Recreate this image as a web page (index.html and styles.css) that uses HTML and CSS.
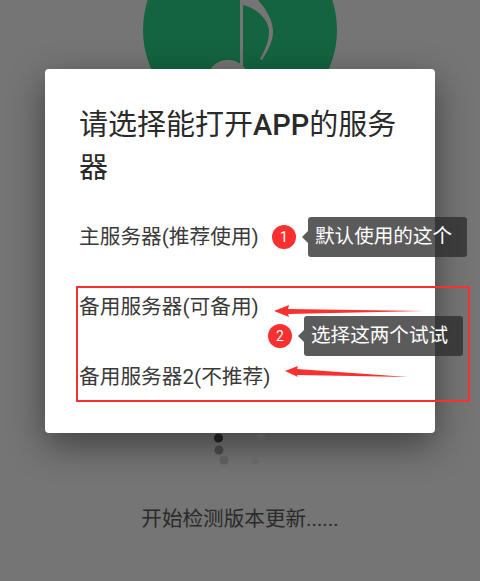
FILE: index.html
```html
<!DOCTYPE html>
<html lang="zh-CN">
<head>
  <meta charset="UTF-8" />
  <meta name="viewport" content="width=device-width, initial-scale=1.0"/>
  <title>选择服务器</title>
  <link rel="stylesheet" href="styles.css">
</head>
<body>

<div class="screen">
  <svg class="logo" width="200" height="100" viewBox="140 0 200 100">
    <circle cx="240" cy="30" r="97" fill="#14643f"/>
    <path d="M240 0h3v72h-3z" fill="#757575"/>
    <ellipse cx="228" cy="78" rx="20" ry="18" fill="#757575"/>
    <path d="M243 5L243 0H258C266 9 273 20 273 32C273 42 267 52 262 60L260 59C265 50 269 41 269 32C269 19 256 8 243 5Z" fill="#757575"/>
  </svg>

  <div class="dialog">
    <h2 class="dialog-title">请选择能打开<b>APP</b>的服务<br>器</h2>
    <div class="option">主服务器(推荐使用)</div>
    <div class="option">备用服务器(可备用)</div>
    <div class="option">备用服务器2(不推荐)</div>
  </div>

  <svg class="spinner" width="60" height="34" viewBox="210 433 60 34">
    <circle cx="218.5" cy="438" r="4.5" fill="#1c1c1c"/>
    <circle cx="219" cy="450" r="4.5" fill="#404040"/>
    <circle cx="224" cy="460" r="4.5" fill="#5c5c5c"/>
    <circle cx="261" cy="438" r="4.5" fill="#575757"/>
    <circle cx="255" cy="460" r="4" fill="#666"/>
  </svg>

  <p class="status">开始检测版本更新......</p>

  <!-- red notes drawn over the shot -->
  <div class="red-box"></div>
  <span class="badge badge-1">1</span>
  <span class="badge badge-2">2</span>
  <div class="tip tip-1">默认使用的这个</div>
  <div class="tip tip-2">选择这两个试试</div>
  <svg class="arrows" width="480" height="581" viewBox="0 0 480 581">
    <path d="M274 311L289 305L288 309L424 311L288 314L289 317Z" fill="#f8302f"/>
    <path d="M285 371L298 366L297 369L408 377L297 375L298 377Z" fill="#f8302f"/>
  </svg>
</div>

</body>
</html>
```

FILE: styles.css
```css
body {
  margin: 0;
  font-family: Roboto, "Noto Sans CJK SC", sans-serif;
}
.screen {
  position: relative;
  width: 480px;
  height: 581px;
  overflow: hidden;
  background: #757575;
  display: flex;
  flex-direction: column;
  align-items: center;
  padding-top: 69px;
  box-sizing: border-box;
}
.logo {
  position: absolute;
  left: 140px;
  top: 0;
}
.dialog {
  position: relative;
  width: 390px;
  height: 364px;
  box-sizing: border-box;
  padding: 35px 30px 21px 34px;
  background: #fff;
  border-radius: 4px;
  box-shadow: 0 12px 36px rgba(0, 0, 0, 0.45);
}
.dialog-title {
  margin: 0 0 12px;
  font-size: 29px;
  line-height: 43px;
  font-weight: 400;
  color: #2a2a2a;
}
.dialog-title b {
  font-weight: 500;
}
.option {
  height: 70px;
  line-height: 70px;
  font-size: 20.7px;
  color: #3a3a3a;
  white-space: nowrap;
}
.spinner {
  position: relative;
}
.status {
  position: relative;
  margin: 37px 0 0;
  font-size: 20.6px;
  line-height: 30px;
  color: #2a2a2a;
}
.red-box {
  position: absolute;
  left: 76px;
  top: 286px;
  width: 394px;
  height: 116px;
  box-sizing: border-box;
  border: 2px solid #f8302f;
}
.badge {
  position: absolute;
  width: 24px;
  height: 24px;
  border-radius: 50%;
  background: #f8302f;
  color: #fff;
  font-size: 14px;
  line-height: 24px;
  text-align: center;
}
.badge-1 {
  left: 272px;
  top: 225px;
}
.badge-2 {
  left: 268px;
  top: 324px;
}
.tip {
  position: absolute;
  width: 159px;
  height: 40px;
  box-sizing: border-box;
  padding-left: 7px;
  background: rgba(45, 45, 45, 0.78);
  border-radius: 3px;
  color: #fff;
  font-size: 19.6px;
  line-height: 40px;
  white-space: nowrap;
}
.tip::before {
  content: "";
  position: absolute;
  left: -6px;
  top: 14px;
  border-style: solid;
  border-width: 6px 6px 6px 0;
  border-color: transparent rgba(45, 45, 45, 0.78) transparent transparent;
}
.tip-1 {
  left: 308px;
  top: 217px;
}
.tip-2 {
  left: 304px;
  top: 316px;
}
.arrows {
  position: absolute;
  left: 0;
  top: 0;
}
```
